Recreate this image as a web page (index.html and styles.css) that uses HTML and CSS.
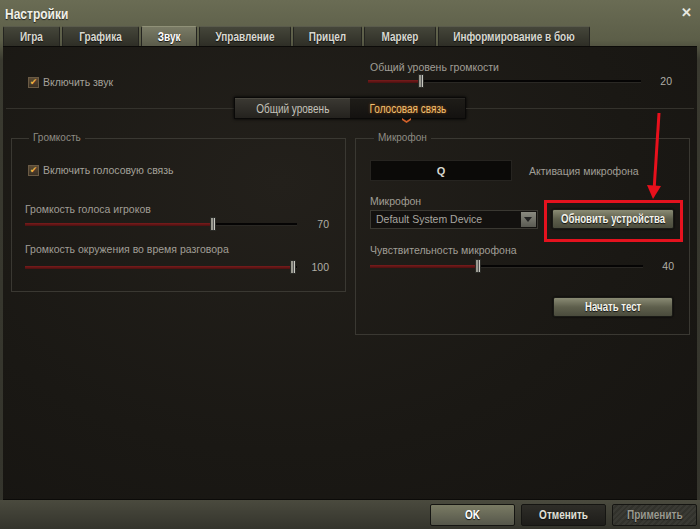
FILE: index.html
```html
<!DOCTYPE html>
<html lang="ru">
<head>
<meta charset="utf-8">
<title>Настройки</title>
<link rel="stylesheet" href="styles.css">
</head>
<body>
<div class="window">
  <div class="titlebar">
    <span class="title"><span class="n">Настройки</span></span>
    <span class="close">✕</span>
  </div>
  <div class="tabs">
    <div class="tab w1"><span class="n">Игра</span></div>
    <div class="tab w2"><span class="n">Графика</span></div>
    <div class="tab w3 active"><span class="n">Звук</span></div>
    <div class="tab w4"><span class="n">Управление</span></div>
    <div class="tab w5"><span class="n">Прицел</span></div>
    <div class="tab w6"><span class="n">Маркер</span></div>
    <div class="tab w7"><span class="n">Информирование в бою</span></div>
  </div>
  <div class="content">
    <div class="toprow">
      <div class="topleft">
        <label class="check"><span class="box">✔</span>Включить звук</label>
      </div>
      <div class="topright">
        <div class="label">Общий уровень громкости</div>
        <div class="slider">
          <div class="track"><div class="fill" style="width:53px"></div><span class="thumb"></span></div>
          <span class="val">20</span>
        </div>
      </div>
    </div>
    <div class="segrow">
      <div class="hline"></div>
      <div class="seg">
        <div class="segbtn"><span class="n">Общий уровень</span></div>
        <div class="segbtn on"><span class="n">Голосовая связь</span><span class="chev"></span></div>
      </div>
      <div class="hline"></div>
    </div>
    <div class="panels">
      <fieldset class="fs left">
        <legend>Громкость</legend>
        <label class="check in1"><span class="box">✔</span>Включить голосовую связь</label>
        <div class="label l1">Громкость голоса игроков</div>
        <div class="slider s1">
          <div class="track"><div class="fill" style="width:188px"></div><span class="thumb"></span></div>
          <span class="val">70</span>
        </div>
        <div class="label l2">Громкость окружения во время разговора</div>
        <div class="slider s2">
          <div class="track"><div class="fill" style="width:268px"></div><span class="thumb"></span></div>
          <span class="val">100</span>
        </div>
      </fieldset>
      <fieldset class="fs right">
        <legend>Микрофон</legend>
        <div class="keyrow">
          <div class="key">Q</div>
          <span class="label">Активация микрофона</span>
        </div>
        <div class="label l3">Микрофон</div>
        <div class="devrow">
          <div class="select"><span>Default System Device</span><span class="arrow"></span></div>
          <div class="btn refresh"><span class="n">Обновить устройства</span></div>
        </div>
        <div class="label l4">Чувствительность микрофона</div>
        <div class="slider s3">
          <div class="track"><div class="fill" style="width:108px"></div><span class="thumb"></span></div>
          <span class="val">40</span>
        </div>
        <div class="testrow"><div class="btn test"><span class="n">Начать тест</span></div></div>
      </fieldset>
    </div>
  </div>
  <div class="footer">
    <div class="fbtn ok"><span class="n">OK</span></div>
    <div class="fbtn cancel"><span class="n">Отменить</span></div>
    <div class="fbtn apply"><span class="n">Применить</span></div>
  </div>
  <div class="annot-box"></div>
  <svg class="annot-arrow" width="40" height="100" viewBox="0 0 40 100">
    <line x1="21" y1="2" x2="16" y2="80" stroke="#e8101c" stroke-width="3"/>
    <polygon points="9,74 23,75 15,88" fill="#e8101c"/>
  </svg>
</div>
</body>
</html>
```

FILE: styles.css
```css
* { box-sizing: border-box; }
html, body { margin: 0; padding: 0; }
body {
  width: 700px; height: 529px; overflow: hidden;
  background: #1c1a16;
  font-family: "Liberation Sans", Arial, sans-serif;
  font-size: 10.5px;
  color: #a09e96;
}
.n {
  display: inline-block;
  white-space: nowrap;
  transform: scaleX(0.8);
}
.window {
  position: relative;
  width: 700px; height: 529px;
  display: flex; flex-direction: column;
  background: linear-gradient(180deg, #6a6c54 0%, #5c5e48 40px, #3a3a30 60px, #34342c 100%);
}
.titlebar {
  height: 26px;
  display: flex; align-items: center; justify-content: space-between;
  padding: 0 8px 0 5px;
}
.title {
  font-weight: bold; font-size: 15px; color: #f0f0e8;
  text-shadow: 0 1px 1px #222;
}
.title .n { transform-origin: left center; }
.close { color: #e8e8e0; font-size: 13px; font-weight: bold; margin-top: -2px; }
.tabs {
  height: 20px;
  display: flex; gap: 2px;
  padding-left: 3px;
}
.tab {
  height: 20px;
  display: flex; align-items: center; justify-content: center;
  font-weight: bold; font-size: 12.5px; color: #d8d8d0;
  background: linear-gradient(180deg, #45463a 0%, #2e2e26 100%);
  border: 1px solid #242420;
  border-top-color: #5a5b4c;
  border-bottom: none;
  border-radius: 2px 2px 0 0;
  text-shadow: 0 1px 1px #111;
  white-space: nowrap;
  overflow: hidden;
}
.tab.active {
  background: linear-gradient(180deg, #7a7b66 0%, #5a5b4a 100%);
  color: #fff;
  border-top-color: #909178;
}
.w1 { width: 57px; } .w2 { width: 77px; } .w3 { width: 56px; } .w4 { width: 92px; }
.w5 { width: 69px; } .w6 { width: 72px; } .w7 { width: 152px; }

.content {
  flex: 1;
  margin: 0 3px;
  background: radial-gradient(ellipse at 40% 30%, #23201b 0%, #1a1814 60%, #161411 100%);
  border-top: 1px solid #0c0b09;
  border-bottom: 1px solid #0c0b09;
  display: flex; flex-direction: column;
  padding-top: 14px;
}
.toprow { display: flex; height: 36px; }
.topleft { width: 365px; padding-left: 25px; padding-top: 15px; }
.topright { flex: 1; }
.check {
  display: flex; align-items: center; gap: 4px;
  color: #a4a29a; font-size: 10.5px;
}
.box {
  width: 11px; height: 11px;
  background: linear-gradient(180deg, #5a4a34, #3a3024);
  border: 1px solid #6a5a44;
  color: #f0b040; font-size: 9px; line-height: 9px; text-align: center;
  font-family: "DejaVu Sans", sans-serif;
}
.label { color: #a09e96; font-size: 10.5px; white-space: nowrap; }
.slider { display: flex; align-items: center; height: 14px; }
.track {
  position: relative;
  height: 3px; background: #050404;
  border-bottom: 1px solid #2a2824;
}
.fill { height: 3px; background: linear-gradient(180deg, #7a1c1c, #4a1010); }
.thumb {
  position: absolute; top: -6px;
  width: 6px; height: 14px; margin-left: -3px;
  background: linear-gradient(90deg, #9a9a90 0 2px, #555 2px 3px, #c8c8c0 3px 100%);
  border: 1px solid #2a2a26;
}
.val { color: #b0aea6; font-size: 10.5px; text-align: right; }

.topright .label { padding-left: 2px; height: 13px; line-height: 13px; }
.topright .track { width: 273px; }
.topright .thumb { left: 53px; }
.topright .val { width: 31px; }

.segrow { display: flex; align-items: center; height: 22px; margin: 0 3px; }
.hline { flex: 1; height: 1px; background: #34322c; }
.seg {
  display: flex; height: 22px;
  border: 1px solid #0a0908;
  background: #0e0d0b;
  box-shadow: 0 0 3px #000;
}
.segbtn {
  position: relative;
  width: 115px;
  display: flex; align-items: center; justify-content: center;
  font-size: 12.5px; color: #c4c2ba;
  background: linear-gradient(180deg, #3a3832 0%, #24221e 100%);
  border-top: 1px solid #4a4840;
}
.segbtn.on {
  background: linear-gradient(180deg, #1e1c18 0%, #141210 100%);
  color: #f0c070;
  border-top-color: #2a2824;
  text-shadow: 0 0 3px #a05010;
}
.chev {
  position: absolute; left: 52px; bottom: -5px;
  width: 9px; height: 5px;
  background: #d0602a;
  clip-path: polygon(0 0, 50% 60%, 100% 0, 100% 40%, 50% 100%, 0 40%);
}

.panels { display: flex; gap: 9px; padding: 13px 0 0 8px; align-items: flex-start; }
.fs {
  margin: 0; border: 1px solid #3a3832;
  padding: 0 0 0 13px;
  min-width: 0;
}
.fs legend {
  color: #8e8c84; font-size: 10px; padding: 0 4px; margin-left: 4px;
  line-height: 12px;
}
.fs.left { width: 335px; height: 160px; }
.fs.right { width: 335px; height: 203px; padding-left: 14px; }

.in1 { margin-top: 20px; padding-left: 3px; }
.l1 { margin-top: 26px; line-height: 14px; }
.s1 { margin-top: 1px; }
.l2 { margin-top: 11px; line-height: 14px; }
.s2 { margin-top: 4px; }
.left .track { width: 272px; }
.left .val { width: 32px; }
.s1 .thumb { left: 188px; }
.s2 .thumb { left: 268px; }

.keyrow { display: flex; align-items: center; gap: 17px; margin-top: 16px; }
.key {
  width: 142px; height: 21px;
  background: #0b0a08;
  border: 1px solid #262420;
  display: flex; align-items: center; justify-content: center;
  color: #d8d8d0; font-weight: bold; font-size: 11px;
}
.l3 { margin-top: 13px; line-height: 14px; }
.devrow { display: flex; align-items: center; gap: 14px; margin-top: 1px; }
.select {
  width: 168px; height: 19px;
  background: #13110f;
  border: 1px solid #3a3832;
  display: flex; align-items: center; justify-content: space-between;
  padding: 0 1px 0 5px;
  color: #a8a6a0; font-size: 10.5px;
}
.arrow {
  width: 15px; height: 15px;
  background: linear-gradient(180deg, #8a8a80, #5a5a52);
  position: relative;
}
.arrow::after {
  content: ""; position: absolute; left: 3px; top: 5px;
  border-left: 4.5px solid transparent; border-right: 4.5px solid transparent;
  border-top: 5px solid #222;
}
.btn {
  height: 20px;
  display: flex; align-items: center; justify-content: center;
  font-weight: bold; font-size: 12px; color: #f4f4ec;
  background: linear-gradient(180deg, #8a8b74 0%, #5e5f4c 50%, #4a4b3c 100%);
  border: 1px solid #1a1a16;
  border-radius: 2px;
  text-shadow: 0 1px 1px #111;
  box-shadow: 0 0 2px #000;
}
.refresh { width: 122px; }
.l4 { margin-top: 14px; line-height: 14px; }
.s3 { margin-top: 2px; }
.right .track { width: 273px; }
.right .val { width: 31px; }
.s3 .thumb { left: 108px; }
.testrow { display: flex; justify-content: flex-end; padding-right: 16px; margin-top: 24px; }
.test { width: 120px; }

.footer {
  height: 29px;
  display: flex; align-items: center; justify-content: flex-end; gap: 6px;
  padding-right: 3px;
  background: linear-gradient(180deg, #4a4a3e 0%, #34342c 100%);
}
.fbtn {
  height: 22px; width: 85px;
  display: flex; align-items: center; justify-content: center;
  font-weight: bold; font-size: 12.5px;
  border: 1px solid #151512; border-radius: 2px;
  text-shadow: 0 1px 1px #111;
}
.ok { background: linear-gradient(180deg, #7a7b64, #55564a); color: #fff; }
.cancel { background: linear-gradient(180deg, #2e2d28, #1e1d1a); color: #e0e0d8; }
.apply {
  background: repeating-linear-gradient(135deg, #3a3a34 0 2px, #32322c 2px 4px);
  color: #9a9a90;
}

.annot-box {
  position: absolute; left: 544px; top: 200px;
  width: 139px; height: 42px;
  border: 3px solid #e4121e;
}
.annot-arrow { position: absolute; left: 638px; top: 111px; }
```
